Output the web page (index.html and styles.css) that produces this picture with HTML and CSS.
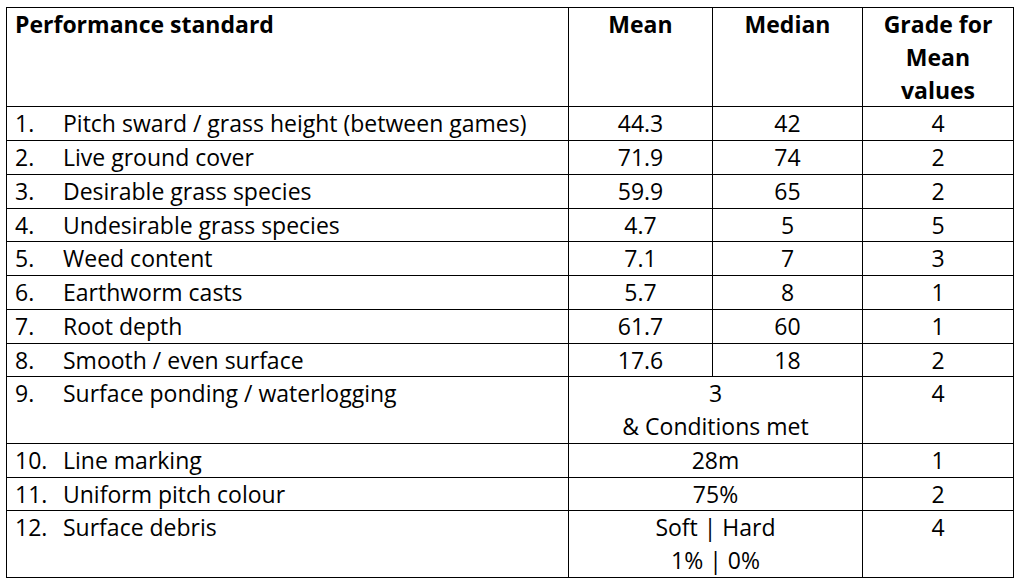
FILE: index.html
```html
<!DOCTYPE html>
<html lang="en">
<head>
<meta charset="utf-8">
<title>Performance standards</title>
<link rel="stylesheet" href="styles.css">
</head>
<body>
<table class="perf">
  <colgroup>
    <col class="c-name">
    <col class="c-mean">
    <col class="c-median">
    <col class="c-grade">
  </colgroup>
  <thead>
    <tr>
      <th class="name">Performance standard</th>
      <th>Mean</th>
      <th>Median</th>
      <th>Grade for<br>Mean<br>values</th>
    </tr>
  </thead>
  <tbody>
    <tr><td class="name"><span class="num">1.</span><span>Pitch sward / grass height (between games)</span></td><td>44.3</td><td>42</td><td>4</td></tr>
    <tr><td class="name"><span class="num">2.</span><span>Live ground cover</span></td><td>71.9</td><td>74</td><td>2</td></tr>
    <tr><td class="name"><span class="num">3.</span><span>Desirable grass species</span></td><td>59.9</td><td>65</td><td>2</td></tr>
    <tr><td class="name"><span class="num">4.</span><span>Undesirable grass species</span></td><td>4.7</td><td>5</td><td>5</td></tr>
    <tr><td class="name"><span class="num">5.</span><span>Weed content</span></td><td>7.1</td><td>7</td><td>3</td></tr>
    <tr><td class="name"><span class="num">6.</span><span>Earthworm casts</span></td><td>5.7</td><td>8</td><td>1</td></tr>
    <tr><td class="name"><span class="num">7.</span><span>Root depth</span></td><td>61.7</td><td>60</td><td>1</td></tr>
    <tr><td class="name"><span class="num">8.</span><span>Smooth / even surface</span></td><td>17.6</td><td>18</td><td>2</td></tr>
    <tr><td class="name"><span class="num">9.</span><span>Surface ponding / waterlogging</span></td><td colspan="2">3<br>&amp; Conditions met</td><td>4</td></tr>
    <tr><td class="name"><span class="num">10.</span><span>Line marking</span></td><td colspan="2">28m</td><td>1</td></tr>
    <tr><td class="name"><span class="num">11.</span><span>Uniform pitch colour</span></td><td colspan="2">75%</td><td>2</td></tr>
    <tr><td class="name"><span class="num">12.</span><span>Surface debris</span></td><td colspan="2">Soft | Hard<br>1% | 0%</td><td>4</td></tr>
  </tbody>
</table>
</body>
</html>
```
FILE: styles.css
```css
html, body {
  margin: 0;
  padding: 0;
  background: #ffffff;
}
body {
  padding: 7px 0 0 6px;
  font-family: "Open Sans", "Liberation Sans", sans-serif;
  font-size: 23px;
  color: #000000;
}
.perf {
  border-collapse: collapse;
  table-layout: fixed;
  width: 1007px;
}
.c-name { width: 562px; }
.c-mean { width: 144px; }
.c-median { width: 150px; }
.c-grade { width: 151px; }
.perf th,
.perf td {
  border: 1px solid #000000;
  padding: 0 8px;
  line-height: 32.75px;
  vertical-align: top;
  text-align: center;
  font-weight: 400;
}
.perf th {
  font-weight: 700;
}
.perf .name {
  text-align: left;
}
.num {
  display: inline-block;
  width: 48px;
}
```
